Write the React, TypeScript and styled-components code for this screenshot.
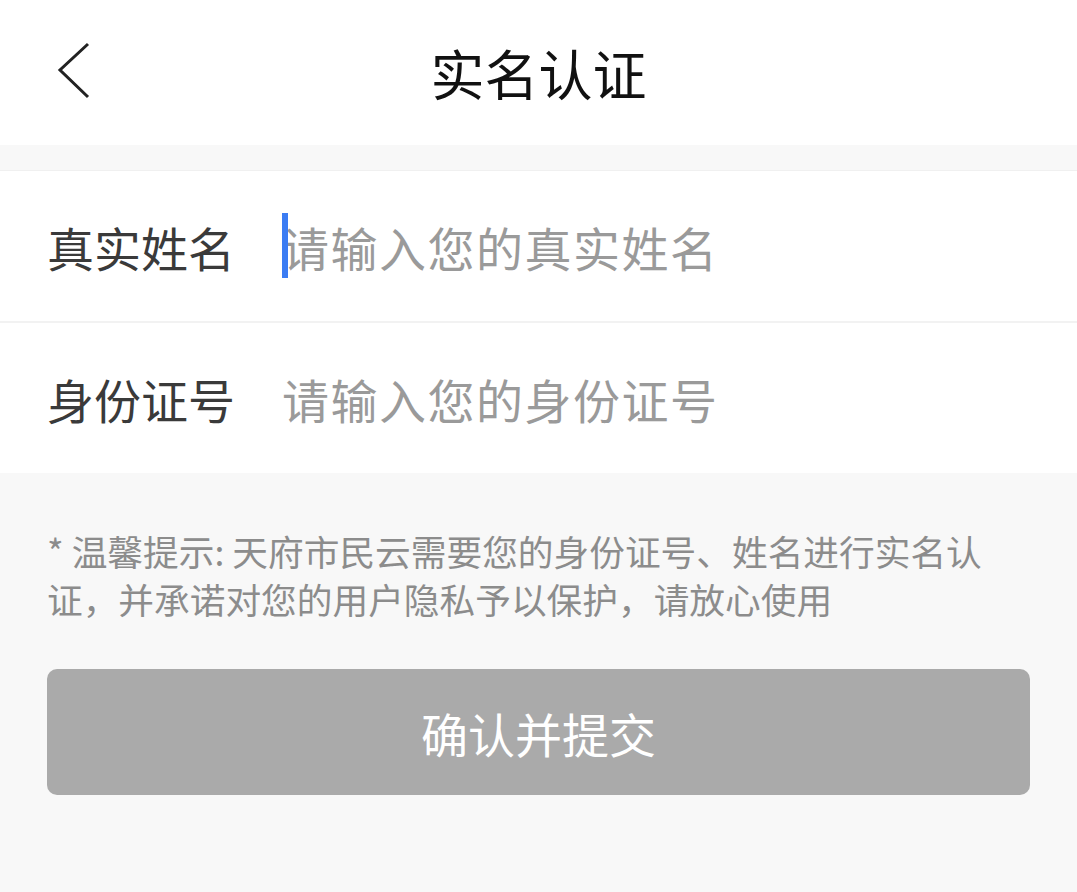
import React from 'react'
import styled, { createGlobalStyle } from 'styled-components'

const GlobalStyle = createGlobalStyle`
  html, body {
    margin: 0;
    padding: 0;
    height: 100%;
    background: #f8f8f8;
    font-family: "Noto Sans CJK SC", "Noto Sans", sans-serif;
  }
  #root {
    min-height: 100%;
  }
`

export const Page = styled.div`
  display: flex;
  flex-direction: column;
  width: 100%;
  min-height: 892px;
  background: #f8f8f8;
`

export const Header = styled.header`
  position: relative;
  display: flex;
  align-items: center;
  justify-content: center;
  height: 145px;
  background: #fff;
  margin-bottom: 25px;
`

export const BackButton = styled.button`
  position: absolute;
  left: 50px;
  top: 38px;
  width: 48px;
  height: 66px;
  padding: 0;
  border: none;
  background: transparent;
  cursor: pointer;
`

export const Title = styled.h1`
  margin: 0;
  font-size: 54px;
  font-weight: 400;
  color: #111;
  line-height: 1;
`

export const Form = styled.section`
  display: flex;
  flex-direction: column;
  background: #fff;
  border-top: 1px solid #f0f0f0;
`

export const Row = styled.label<{ $last?: boolean }>`
  display: flex;
  align-items: center;
  height: 150px;
  padding-left: 47px;
  border-bottom: ${(p) => (p.$last ? 'none' : '2px solid #f2f2f2')};
`

export const Label = styled.span`
  width: 235px;
  flex-shrink: 0;
  font-size: 47px;
  color: #3a3a3a;
  line-height: 1;
`

export const Field = styled.div`
  position: relative;
  display: flex;
  align-items: center;
  flex: 1;
`

export const Caret = styled.span`
  position: absolute;
  left: 0;
  top: 50%;
  margin-top: -33px;
  width: 6px;
  height: 65px;
  background: #3b7cf3;
`

export const Input = styled.input`
  flex: 1;
  border: none;
  outline: none;
  background: transparent;
  padding: 0;
  font-family: inherit;
  font-size: 47px;
  letter-spacing: 1.5px;
  color: #333;
  &::placeholder {
    color: #9a9a9a;
  }
`

export const Notice = styled.p`
  margin: 54px 47px 46px;
  font-size: 35.7px;
  line-height: 48px;
  color: #8c8c8c;
`

export const Submit = styled.button`
  display: flex;
  align-items: center;
  justify-content: center;
  margin: 0 47px;
  height: 126px;
  border: none;
  border-radius: 10px;
  background: #aaaaaa;
  color: #fff;
  font-family: inherit;
  font-size: 47px;
  cursor: pointer;
`

const App: React.FC = () => {
  return (
    <Page>
      <GlobalStyle />
      <Header>
        <BackButton aria-label="返回">
          <svg width="48" height="66" viewBox="0 0 48 66">
            <polyline points="38,6 10,32 38,59" fill="none" stroke="#222" strokeWidth="3" />
          </svg>
        </BackButton>
        <Title>实名认证</Title>
      </Header>
      <Form>
        <Row>
          <Label>真实姓名</Label>
          <Field>
            <Caret />
            <Input placeholder="请输入您的真实姓名" />
          </Field>
        </Row>
        <Row $last>
          <Label>身份证号</Label>
          <Field>
            <Input placeholder="请输入您的身份证号" />
          </Field>
        </Row>
      </Form>
      <Notice>* 温馨提示: 天府市民云需要您的身份证号、姓名进行实名认证，并承诺对您的用户隐私予以保护，请放心使用</Notice>
      <Submit>确认并提交</Submit>
    </Page>
  )
}

export default App
